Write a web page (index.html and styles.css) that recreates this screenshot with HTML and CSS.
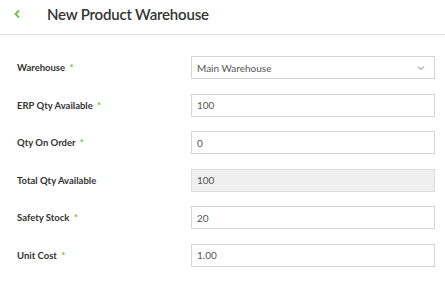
FILE: index.html
```html
<!DOCTYPE html>
<html>
<head>
<meta charset="utf-8">
<link rel="stylesheet" href="styles.css">
</head>
<body>
<div class="header">
  <svg class="back" width="8" height="10" viewBox="0 0 8 10"><path d="M6 1.5 L2.5 5 L6 8.5" fill="none" stroke="#6cc24a" stroke-width="1.8"/></svg>
  <h1 class="title">New Product Warehouse</h1>
</div>
<form class="form">
  <div class="row">
    <label class="label">Warehouse <span class="req">*</span></label>
    <div class="field select"><span>Main Warehouse</span>
      <svg width="8" height="6" viewBox="0 0 8 6"><path d="M1 1.5 L4 4.5 L7 1.5" fill="none" stroke="#777" stroke-width="1"/></svg>
    </div>
  </div>
  <div class="row">
    <label class="label">ERP Qty Available <span class="req">*</span></label>
    <div class="field">100</div>
  </div>
  <div class="row">
    <label class="label">Qty On Order <span class="req">*</span></label>
    <div class="field">0</div>
  </div>
  <div class="row">
    <label class="label">Total Qty Available</label>
    <div class="field disabled">100</div>
  </div>
  <div class="row">
    <label class="label">Safety Stock <span class="req">*</span></label>
    <div class="field">20</div>
  </div>
  <div class="row">
    <label class="label">Unit Cost <span class="req">*</span></label>
    <div class="field">1.00</div>
  </div>
</form>
</body>
</html>
```
FILE: styles.css
```css
html, body {
  margin: 0;
  padding: 0;
  background: #fff;
  font-family: "Lato", "Open Sans", sans-serif;
  color: #333;
}
.header {
  height: 34px;
  border-bottom: 1px solid #dedede;
  display: flex;
  align-items: center;
  padding-left: 13px;
}
.back {
  display: block;
  margin-top: -6px;
}
.title {
  margin: -6px 0 0 26px;
  font-size: 15px;
  font-weight: 600;
  letter-spacing: -0.2px;
  font-family: "Lato", sans-serif;
  color: #333;
}
.form {
  padding: 21px 10px 0 17px;
  display: flex;
  flex-direction: column;
  gap: 14.6px;
}
.row {
  display: flex;
  align-items: center;
  height: 23px;
}
.label {
  width: 174px;
  font-size: 9.5px;
  font-weight: 700;
  color: #333;
}
.req {
  color: #6cc24a;
  margin-left: 2px;
}
.field {
  width: 232px;
  height: 21px;
  border: 1px solid #d4d4d4;
  padding: 0 5px;
  display: flex;
  align-items: center;
  font-size: 10px;
  color: #555;
}
.select {
  justify-content: space-between;
  padding-right: 9px;
  width: 228px;
}
.disabled {
  background: #efefef;
  border-color: #dcdcdc;
}
```
